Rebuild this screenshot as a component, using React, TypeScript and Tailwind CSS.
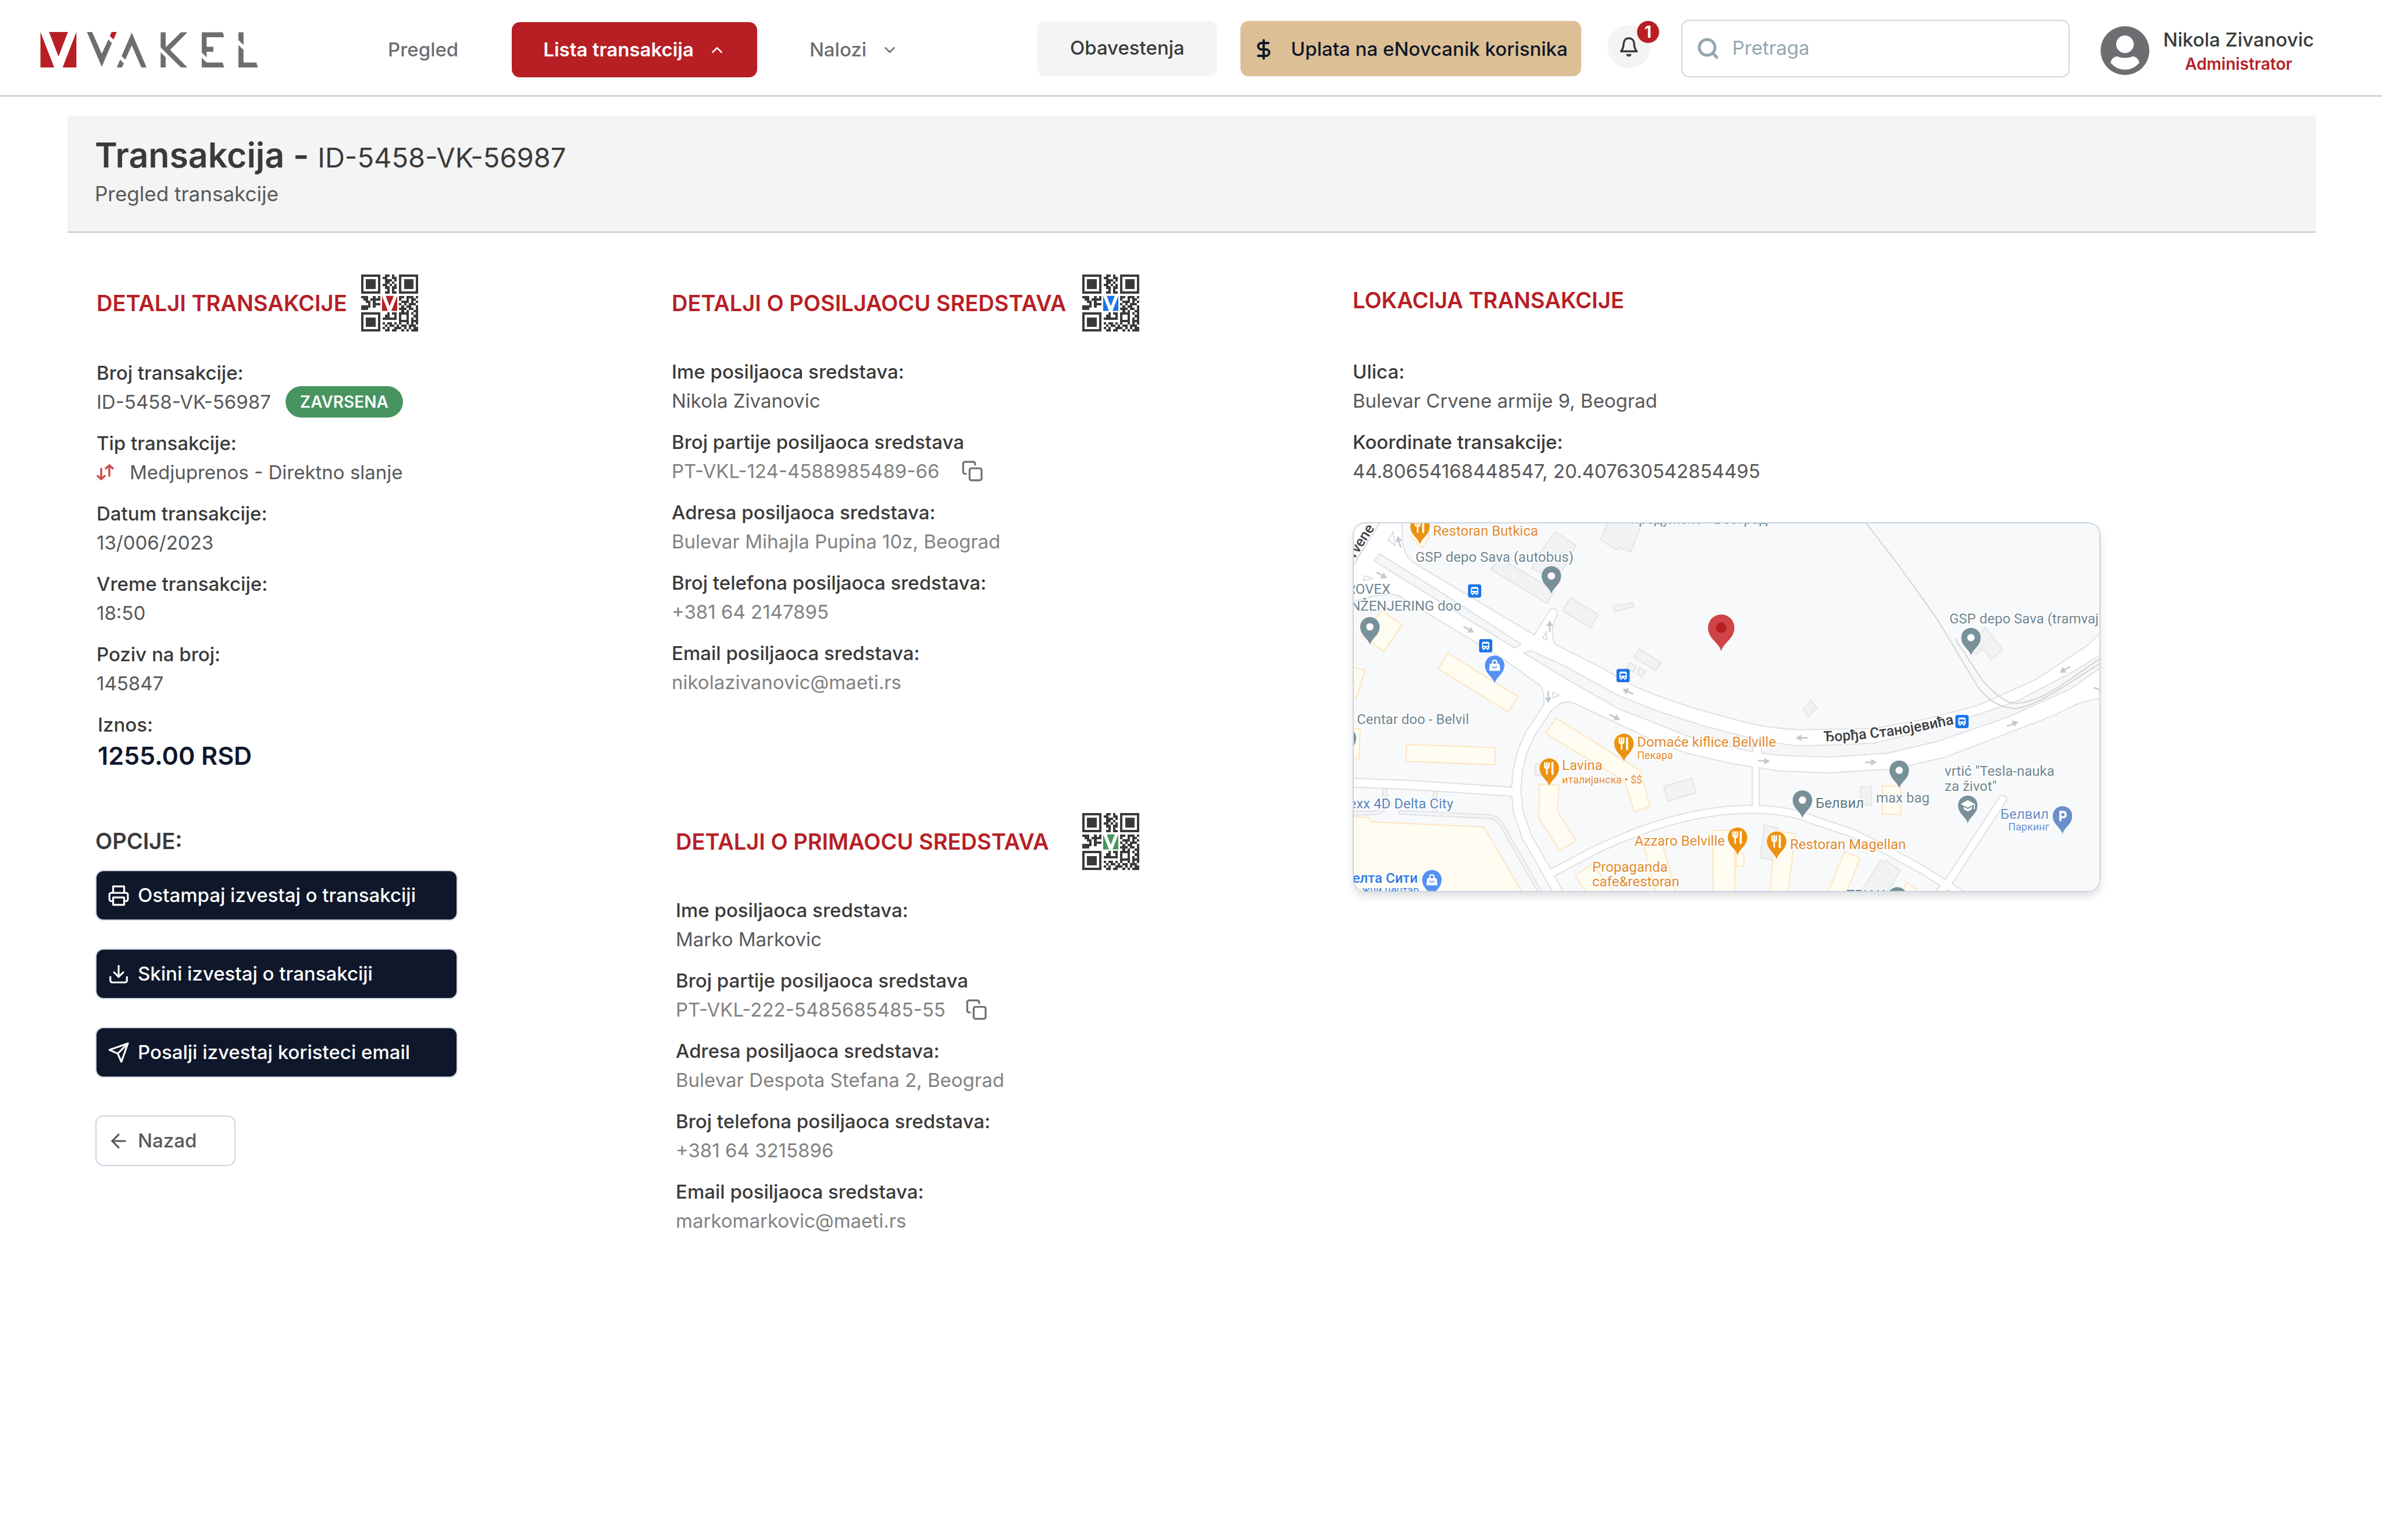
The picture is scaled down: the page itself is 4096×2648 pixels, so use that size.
import type { ReactNode } from "react";
import { ArrowLeft, ChevronDown, ChevronUp, DollarSign } from "lucide-react";
import { FiCopy, FiDownload, FiPrinter, FiSend } from "react-icons/fi";

interface Field {
  label: string;
  value: string;
  muted?: boolean;
  copy?: boolean;
}

const SENDER: Field[] = [
  { label: "Ime posiljaoca sredstava:", value: "Nikola Zivanovic" },
  { label: "Broj partije posiljaoca sredstava", value: "PT-VKL-124-4588985489-66", muted: true, copy: true },
  { label: "Adresa posiljaoca sredstava:", value: "Bulevar Mihajla Pupina 10z, Beograd", muted: true },
  { label: "Broj telefona posiljaoca sredstava:", value: "+381 64 2147895", muted: true },
  { label: "Email posiljaoca sredstava:", value: "nikolazivanovic@maeti.rs", muted: true },
];

const RECEIVER: Field[] = [
  { label: "Ime posiljaoca sredstava:", value: "Marko Markovic" },
  { label: "Broj partije posiljaoca sredstava", value: "PT-VKL-222-5485685485-55", muted: true, copy: true },
  { label: "Adresa posiljaoca sredstava:", value: "Bulevar Despota Stefana 2, Beograd", muted: true },
  { label: "Broj telefona posiljaoca sredstava:", value: "+381 64 3215896", muted: true },
  { label: "Email posiljaoca sredstava:", value: "markomarkovic@maeti.rs", muted: true },
];

const LOCATION: Field[] = [
  { label: "Ulica:", value: "Bulevar Crvene armije 9, Beograd" },
  { label: "Koordinate transakcije:", value: "44.80654168448547, 20.407630542854495" },
];

// 24x24 modules, the middle is left free for the brand mark
const QR_ROWS = [
  "########..##.#..########",
  "#......#.##..##.#......#",
  "#.####.#..###.#.#.####.#",
  "#.####.#..##.#..#.####.#",
  "#.####.#.##.#.#.#.####.#",
  "#.####.#..##.##.#.####.#",
  "#......#...#.#..#......#",
  "########..##.##.########",
  "........................",
  "###..#.#........##.###.#",
  ".##.####........#..#.##.",
  "..##.#...........###.#.#",
  "...#.###........#.#.###.",
  "####.#...........#.##..#",
  "###.............###.##.#",
  ".................#.#..##",
  "########...#.##.####.#.#",
  "#......#..##..#.#..#..##",
  "#.####.#.######.#..#.#.#",
  "#.####.#........####.###",
  "#.####.#.#.##.#.#..#.#.#",
  "#.####.#..#.##.#.##.###.",
  "#......#.#.#..###.#.#.##",
  "########..##.##..#.#.###",
];

function Logo() {
  return (
    <svg viewBox="51 60 1422 232" className="h-[61px] w-[375px]" role="img" aria-label="Vakel">
      <g fill="#b71f25">
        <path d="M51 60 141 292H51ZM107 60H231L169 221ZM286 60V292H196Z" />
        <path d="M516 60H550L529 109 505 87Z" />
      </g>
      <g fill="#6d6e71">
        <path d="M355 60H389L452 203 495 109 518 132 452 288Z" />
        <path d="M648 64 745 292H711L648 147 606 241 582 218ZM572 241 596 265 584 292H551Z" />
        <path d="M837 62H870V160L970 62H1012L899 177 1012 292H970L837 161ZM837 193 870 225V292H837Z" />
        <path d="M1106 62H1243L1253 94H1138V157H1182V189H1138V225L1106 195ZM1106 228 1138 260H1242L1253 292H1106Z" />
        <path d="M1346 62H1379V145L1346 113ZM1346 146 1379 177V260H1463L1473 292H1346Z" />
      </g>
    </svg>
  );
}

function QrCode({ color }: { color: string }) {
  return (
    <svg viewBox="0 0 24 24" className="size-[98px] shrink-0" shapeRendering="crispEdges" role="img" aria-label="QR kod">
      {QR_ROWS.map((row, y) =>
        row.split("").map((cell, x) =>
          cell === "#" ? <rect key={`${x}-${y}`} x={x} y={y} width="1" height="1" fill="#3a3a3a" /> : null
        )
      )}
      <g fill={color} shapeRendering="auto" transform="translate(8.8 9) scale(0.0272)">
        <path d="M0 0 90 232H0ZM56 0H180L118 161ZM235 0V232H145Z" />
      </g>
    </svg>
  );
}

function BellIcon() {
  return (
    <svg viewBox="130 170 128 140" className="h-[37px] w-[34px]" fill="none" stroke="#3a3a3a" strokeWidth="13" strokeLinecap="round" strokeLinejoin="round">
      <path d="M143 269H245C234 258 229 246 228 218C227 197 213 184 194 184S161 197 160 218C159 246 153 258 143 269Z" />
      <path d="M184 292Q194 302 203 292" strokeWidth="14" />
    </svg>
  );
}

function SearchIcon() {
  return (
    <svg viewBox="0 0 36 36" className="size-[36px] shrink-0" fill="none" stroke="#94a7b1" strokeLinecap="round">
      <circle cx="16.5" cy="16.5" r="13.5" strokeWidth="5" />
      <path d="m27 27 6 6.500" strokeWidth="5" />
    </svg>
  );
}

function AvatarIcon() {
  return (
    <svg viewBox="0 0 100 100" className="size-[84px] shrink-0">
      <circle cx="50" cy="50" r="50" fill="#6d6e71" />
      <circle cx="50" cy="37" r="18" fill="#fff" />
      <path d="M20.500 75C22 68 27 62 34 62Q41 65 50 65T66 62C73 62 78 68 79.500 75Q68 89 50 89T20.500 75Z" fill="#fff" />
    </svg>
  );
}

function TransferIcon() {
  return (
    <svg viewBox="0 0 30 28" className="h-[28px] w-[30px] shrink-0" fill="none" stroke="#d04a4c" strokeWidth="3.500" strokeLinecap="round" strokeLinejoin="round">
      <path d="M8 8V26M2 20.500 8 26 14 20.500" />
      <path d="M22 20V2M16 7.500 22 2 28 7.500" />
    </svg>
  );
}

function SectionTitle({ children }: { children: ReactNode }) {
  return <h2 className="text-[38px] leading-[48px] font-semibold whitespace-nowrap text-[#b71f25]">{children}</h2>;
}

function FieldRow({ label, children, muted }: { label: string; children: ReactNode; muted?: boolean }) {
  return (
    <div>
      <dt className="text-[33px] leading-[50px] font-medium text-[#3a3a3a]">{label}</dt>
      <dd className={`flex h-[50px] items-center text-[33px] leading-[50px] ${muted ? "text-[#828282]" : "text-[#58585a]"}`}>
        {children}
      </dd>
    </div>
  );
}

function FieldList({ fields }: { fields: Field[] }) {
  return (
    <dl className="mt-[44px] flex flex-col gap-[21px]">
      {fields.map((field) => (
        <FieldRow key={field.label} label={field.label} muted={field.muted}>
          {field.copy ? (
            <>
              <span className="w-[464px] whitespace-nowrap">{field.value}</span>
              <button type="button" aria-label="Kopiraj" className="ml-[34px] text-[#6d6e71]">
                <FiCopy size={38} />
              </button>
            </>
          ) : (
            field.value
          )}
        </FieldRow>
      ))}
    </dl>
  );
}

function ActionButton({ icon, children }: { icon: ReactNode; children: ReactNode }) {
  return (
    <button
      type="button"
      className="flex h-[87px] w-[623px] items-center gap-[14px] rounded-[14px] border-2 border-[#cbd5e1] px-[19px] text-[33px] font-medium text-white bg-[#0f172a]"
    >
      {icon}
      {children}
    </button>
  );
}

/* ---------- Map ---------- */

// The map geometry is kept in its own units, labels are set in pixels
const MAP_SCALE = 0.4535;
const MAP_X = 80;
const MAP_Y = 64;

const SIDE_ROADS = [
  { d: "M830 740 750 860 720 925 702 1000 695 1080 704 1160 735 1250 820 1400 870 1490", w: 32 },
  { d: "M60 1046 300 1056 695 1082", w: 30 },
  { d: "M825 1392 1000 1300Q1180 1215 1330 1180T1600 1148 1794 1178 1964 1235L2094 1300 2224 1370 2400 1480", w: 26 },
  { d: "M1604 920V1145", w: 23 },
  { d: "M2290 1480 2344 1410 2540 1110", w: 26 },
];

const LANES = [
  "M60 1162H150Q196 1162 197 1120V1070",
  "M388 1075V1160",
  "M258 1160 590 1175Q625 1178 645 1215L790 1470",
];

const SHOPS = [
  "185,395 262,447 195,549 110,493",
  "60,604 122,622 88,732 60,732",
  "437,556 702,720 666,779 400,615",
  "280,902 616,914 614,979 277,966",
  "60,842 104,842 99,956 60,955",
  "847,803 1165,1000 1204,1138 1143,1158 1108,1042 806,860",
  "784,1052 857,1056 853,1158 923,1267 860,1304 781,1180",
  "60,1174 140,1180 143,1195 573,1215 728,1480 60,1480",
  "985,1355 920,1398 970,1480 1080,1480",
  "1175,1270 1250,1280 1305,1480 1230,1480",
  "1440,1228 1525,1228 1524,1480 1443,1480",
  "1530,1317 1560,1317 1558,1364 1530,1364",
  "1680,1228 1754,1242 1724,1480 1656,1480",
  "1941,1308 2000,1333 1940,1480 1870,1480",
  "2084,1060 2154,1060 2154,1168 2084,1165",
  "2176,1425 2250,1480 2150,1480",
  "297,112 335,80 368,115 340,156",
];

const BUILDINGS = [
  "843,95 923,148 866,250 820,265 755,235 770,200",
  "632,195 842,318 812,367 600,238",
  "902,345 1008,410 978,460 870,395",
  "1065,377 1138,365 1142,380 1068,398",
  "1048,50 1178,50 1130,172 1085,155 1080,165 1050,150 1016,125",
  "1162,540 1245,592 1225,622 1142,572",
  "1122,592 1152,605 1140,628 1114,612",
  "1165,610 1188,625 1170,647 1153,632",
  "1362,1030 1378,1085 1270,1117 1255,1060",
  "1814,735 1836,762 1804,797 1784,770",
  "2474,457 2541,545 2496,580 2440,505",
  "2440,525 2460,545 2440,560 2425,545",
  "2001,1062 2044,1062 2042,1133 2001,1130",
  "1637,1208 1689,1218 1669,1340 1620,1333",
  "2079,1340 2092,1350 2098,1342 2152,1380 2095,1480 1990,1480",
  "770,972 800,975 795,1020 766,1018",
];

const ARROWS = [
  [185, 260, 30],
  [515, 466, 30],
  [1068, 798, 28],
  [1120, 702, 205],
  [823, 455, -90],
  [817, 722, 90],
  [252, 135, -105],
  [1779, 877, 180],
  [1634, 965, 5],
  [2039, 970, 0],
  [2577, 825, -22],
  [2777, 618, 150],
  [2906, 694, 20],
];

const TRIANGLES = ["228,96 210,127 237,148", "122,262 150,272 116,282", "810,475 796,498 812,506", "834,704 858,716 834,726"];

const BUS_STOPS = [
  [538, 320],
  [580, 528],
  [1101, 641],
  [2386, 815],
];

type PinKind = "dot" | "food" | "bag" | "school" | "parking";

const PINS: { x: number; y: number; kind: PinKind }[] = [
  { x: 331, y: 75, kind: "food" },
  { x: 1104, y: 898, kind: "food" },
  { x: 821, y: 992, kind: "food" },
  { x: 1535, y: 1254, kind: "food" },
  { x: 1683, y: 1269, kind: "food" },
  { x: 829, y: 263, kind: "dot" },
  { x: 141, y: 456, kind: "dot" },
  { x: 52, y: 878, kind: "dot" },
  { x: 2420, y: 497, kind: "dot" },
  { x: 2148, y: 1000, kind: "dot" },
  { x: 1781, y: 1113, kind: "dot" },
  { x: 2141, y: 1480, kind: "dot" },
  { x: 2408, y: 1133, kind: "school" },
  { x: 614, y: 602, kind: "bag" },
  { x: 376, y: 1415, kind: "bag" },
  { x: 2767, y: 1173, kind: "parking" },
];

const PIN_COLORS: Record<PinKind, string> = {
  dot: "#78909a",
  food: "#ed920e",
  bag: "#5491f5",
  school: "#78909a",
  parking: "#6b8fca",
};

interface MapText {
  x: number;
  y: number;
  text: string;
  color: string;
  small?: boolean;
  end?: boolean;
  medium?: boolean;
}

const MAP_TEXTS: MapText[] = [
  { x: 1130, y: 66, text: "продужено - Београд", color: "#6f8790" },
  { x: 380, y: 111, text: "Restoran Butkica", color: "#e28b2d" },
  { x: 314, y: 209, text: "GSP depo Sava (autobus)", color: "#6f8790" },
  { x: 219, y: 330, text: "ROVEX", color: "#6f8790", end: true },
  { x: 488, y: 394, text: "NŽENJERING doo", color: "#6f8790", end: true },
  { x: 517, y: 825, text: "Centar doo - Belvil", color: "#6f8790", end: true },
  { x: 1154, y: 911, text: "Domaće kiflice Belville", color: "#e28b2d" },
  { x: 1154, y: 956, text: "Пекара", color: "#e28b2d", small: true },
  { x: 870, y: 998, text: "Lavina", color: "#e28b2d" },
  { x: 870, y: 1050, text: "италијанска • $$", color: "#e28b2d", small: true },
  { x: 457, y: 1145, text: "exx 4D Delta City", color: "#5a84bd", end: true },
  { x: 323, y: 1426, text: "елта Сити", color: "#3478e5", end: true, medium: true },
  { x: 327, y: 1468, text: "жни центар", color: "#3478e5", end: true, small: true },
  { x: 1487, y: 1286, text: "Azzaro Belville", color: "#e28b2d", end: true },
  { x: 983, y: 1384, text: "Propaganda", color: "#e28b2d" },
  { x: 983, y: 1441, text: "cafe&restoran", color: "#e28b2d" },
  { x: 2337, y: 443, text: "GSP depo Sava (tramvaj)", color: "#6f8790" },
  { x: 2060, y: 1123, text: "max bag", color: "#6f8790" },
  { x: 1831, y: 1143, text: "Белвил", color: "#5f7680" },
  { x: 1734, y: 1299, text: "Restoran Magellan", color: "#e28b2d" },
  { x: 2321, y: 1021, text: 'vrtić "Tesla-nauka', color: "#6f8790" },
  { x: 2321, y: 1078, text: 'za život"', color: "#6f8790" },
  { x: 2716, y: 1184, text: "Белвил", color: "#6b8fca", end: true },
  { x: 2718, y: 1229, text: "Паркинг", color: "#6b8fca", end: true, small: true },
  { x: 1947, y: 1490, text: "TRIAX", color: "#6f8790" },
];

function PinGlyph({ kind }: { kind: PinKind }) {
  if (kind === "food") {
    return (
      <g fill="none" stroke="#fff" strokeWidth="6" strokeLinecap="round">
        <path d="M-17-20V-6Q-17 0-9 0T-1-6V-20M-9-20V22" />
        <path d="M12 22V-20" strokeWidth="8" />
      </g>
    );
  }
  if (kind === "bag") {
    return (
      <g>
        <path d="M-18-6H18L21 21H-21Z" fill="#fff" />
        <path d="M-8-6V-11Q-8-19 0-19T8-11V-6" fill="none" stroke="#fff" strokeWidth="5" />
        <path d="M-9 4Q0 14 9 4" fill="none" stroke="#5491f5" strokeWidth="4" />
      </g>
    );
  }
  if (kind === "school") {
    return (
      <g fill="#fff">
        <path d="M0-20 27-5 0 9-27-5Z" />
        <path d="M-16 5 0 14 16 5V14L0 23-16 14ZM23-4H27V14H23Z" />
      </g>
    );
  }
  if (kind === "parking") {
    return <path d="M-8 20V-15H3Q12-15 12-5T3 5H-8" fill="none" stroke="#fff" strokeWidth="8" />;
  }
  return <circle r="14" fill="#fff" />;
}

function LocationMap() {
  return (
    <svg viewBox="0 0 1282 632" className="block w-full font-[Roboto,sans-serif]" role="img" aria-label="Mapa lokacije transakcije">
      <rect width="1282" height="632" fill="#f8f9fb" />
      <g transform={`scale(${MAP_SCALE}) translate(${-MAP_X} ${-MAP_Y})`}>
        {BUILDINGS.map((points) => (
          <polygon key={points} points={points} fill="#f1f2f3" stroke="#e1e3e5" strokeWidth="4" />
        ))}
        {SHOPS.map((points) => (
          <polygon key={points} points={points} fill="#fffcf1" stroke="#fde7c6" strokeWidth="5" />
        ))}

        {LANES.map((d) => (
          <g key={d} fill="none" strokeLinecap="round">
            <path d={d} stroke="#dfe1e3" strokeWidth="18" />
            <path d={d} stroke="#f3f4f6" strokeWidth="10" />
          </g>
        ))}
        {SIDE_ROADS.map((road) => (
          <path key={road.d} d={road.d} fill="none" stroke="#dcdee0" strokeWidth={road.w + 8} strokeLinecap="round" strokeLinejoin="round" />
        ))}
        <path
          d="M40 40H262L263 110Q265 185 305 212L765 487 818 400Q828 382 842 388T850 415Q832 440 833 480 834 515 848 525L1030 617Q1120 675 1225 715L1370 765 1564 818Q1660 842 1774 846L2049 842 2244 807 2444 755 2664 657 2864 525 2940 450V740Q2895 705 2740 790L2324 950 2184 982 2109 996 1884 1010 1694 1003 1514 975 1340 935 1180 870 920 748Q895 735 860 748L800 800 Q805 700 790 682L650 580 265 348Q245 333 225 333 140 333 40 372Z"
          fill="#fff"
          stroke="#dcdee0"
          strokeWidth="4"
        />
        {SIDE_ROADS.map((road) => (
          <path key={road.d} d={road.d} fill="none" stroke="#fff" strokeWidth={road.w} strokeLinecap="round" strokeLinejoin="round" />
        ))}
        <g fill="#f6f7f9" stroke="#dcdee0" strokeWidth="4" strokeLinejoin="round">
          <path d="M178 180 400 318 715 522 690 537 158 207Z" />
          <path d="M725 555 750 546 870 600 1080 715 1230 775 1400 830 1592 880V930L1370 880 1190 808 1085 768 880 650Z" />
          <path d="M1626 890 1764 907 1900 904 2054 897 2244 850 2444 790 2600 735 2800 630 2940 545V590L2800 690 2564 797 2294 890 2104 935 1884 950 1704 944 1626 935Z" />
        </g>
        <path d="M40 283 185 50" fill="none" stroke="#cfd2d4" strokeWidth="4" />
        <g fill="none" stroke="#cfd0d2" strokeWidth="4">
          <path d="M2020 60 2144 220 2294 430 2444 680Q2500 760 2584 766 2640 765 2760 690L2940 575" />
          <path d="M2359 500 2464 660Q2540 745 2590 746 2660 745 2760 680L2940 555" />
        </g>
        {TRIANGLES.map((points) => (
          <polygon key={points} points={points} fill="none" stroke="#cdd1d6" strokeWidth="3" />
        ))}
        {ARROWS.map(([x, y, angle]) => (
          <path key={`${x}-${y}`} d="M-22-3H2V-13L24 0 2 13V3H-22Z" fill="#c3c9d1" transform={`translate(${x} ${y}) rotate(${angle})`} />
        ))}
        {BUS_STOPS.map(([x, y]) => (
          <g key={`${x}-${y}`} transform={`translate(${x} ${y})`}>
            <rect x="-25" y="-25" width="50" height="50" rx="8" fill="#1a73e8" />
            <path d="M-14 11V-9Q-14-15-8-15H8Q14-15 14-9V11H10V16H5V11H-5V16H-10V11Z" fill="#fff" />
            <path d="M-10-8H10V0H-10ZM-9 4H-4V8H-9ZM4 4H9V8H4Z" fill="#1a73e8" />
          </g>
        ))}
        {PINS.map((pin) => (
          <g key={`${pin.x}-${pin.y}`} transform={`translate(${pin.x} ${pin.y})`}>
            <path d="M0 72C-5 44-38 34-38 0A38 38 0 1 1 38 0C38 34 5 44 0 72Z" fill={PIN_COLORS[pin.kind]} stroke="#fff" strokeWidth="2" />
            <PinGlyph kind={pin.kind} />
          </g>
        ))}
        <g transform="translate(1473 459)">
          <path d="M0 90C-7 56-50 44-50 0A50 50 0 1 1 50 0C50 44 7 56 0 90Z" fill="#d04447" />
          <circle r="20" fill="#b71f25" />
        </g>
      </g>

      <g stroke="#fff" strokeWidth="4" strokeLinejoin="round" style={{ paintOrder: "stroke" }}>
        {MAP_TEXTS.map((item) => (
          <text
            key={`${item.text}-${item.x}`}
            x={Math.round((item.x - MAP_X) * MAP_SCALE)}
            y={Math.round((item.y - MAP_Y) * MAP_SCALE)}
            fill={item.color}
            textAnchor={item.end ? "end" : "start"}
            className={`${item.small ? "text-[18px]" : "text-[24px]"} ${item.medium ? "font-medium" : ""}`}
          >
            {item.text}
          </text>
        ))}
        <path id="street" d="M808 375Q930 372 1072 335" fill="none" stroke="none" />
        <text fill="#3c4043" className="text-[25px] font-medium">
          <textPath href="#street">Ђорђа Станојевића</textPath>
        </text>
        <text fill="#3c4043" className="text-[25px] font-medium" textAnchor="end" transform="translate(36 8) rotate(-57)">
          Crvene
        </text>
      </g>
    </svg>
  );
}

/* ---------- Page ---------- */

function Header() {
  return (
    <header className="flex h-[166px] items-center border-b-2 border-[#c4c4c4] pt-[2px] pr-[117px] pl-[69px]">
      <nav className="flex items-center pt-[5px] text-[33px] font-medium">
        <a href="#" className="mr-[223px]">
          <Logo />
        </a>
        <a href="#" className="mr-[92px] text-[#6d6e71]">
          Pregled
        </a>
        <button type="button" className="mr-[90px] flex h-[95px] items-center gap-[25px] rounded-[14px] bg-[#b71f25] px-[54px] font-semibold text-white">
          Lista transakcija
          <ChevronUp size={30} />
        </button>
        <button type="button" className="flex items-center gap-[25px] text-[#6d6e71]">
          Nalozi
          <ChevronDown size={30} />
        </button>
      </nav>

      <div className="ml-auto flex items-center text-[33px]">
        <button type="button" className="mr-[40px] h-[95px] rounded-[14px] bg-[#f4f4f4] px-[56px] font-medium text-[#3a3a3a]">
          Obavestenja
        </button>
        <button type="button" className="mr-[45px] flex h-[95px] items-center gap-[28px] rounded-[14px] bg-[#dcbf94] pt-[4px] pr-[23px] pl-[21px] font-medium text-[#0f172a]">
          <DollarSign size={38} strokeWidth={2.5} />
          Uplata na eNovcanik korisnika
        </button>
        <button type="button" aria-label="Notifikacije" className="relative mr-[53px] mb-[6px] flex size-[74px] items-center justify-center rounded-full bg-[#f4f4f4]">
          <BellIcon />
          <span className="absolute -top-[7px] -right-[15px] flex size-[38px] items-center justify-center rounded-full bg-[#b71f25] text-[28px] leading-[38px] font-bold text-white">
            1
          </span>
        </button>
        <label className="mr-[53px] flex h-[99px] w-[668px] items-center gap-[24px] rounded-[14px] border-2 border-[#cbd5e1] px-[26px]">
          <SearchIcon />
          <input
            type="search"
            placeholder="Pretraga"
            aria-label="Pretraga"
            className="w-full min-w-0 bg-transparent text-[33px] outline-none placeholder:text-[#94a7b1]"
          />
        </label>
        <div className="flex items-center gap-[24px] pt-[8px]">
          <AvatarIcon />
          <div className="flex flex-col items-center pt-[2px]">
            <span className="leading-[44px] font-medium text-[#3a3a3a]">Nikola Zivanovic</span>
            <span className="text-[28px] leading-[40px] font-semibold text-[#b71f25]">Administrator</span>
          </div>
        </div>
      </div>
    </header>
  );
}

export default function App() {
  return (
    <div className="min-h-screen bg-white font-[Inter,sans-serif]">
      <Header />

      <div className="mt-[33px] mr-[114px] ml-[116px] h-[201px] border-b-2 border-[#c4c4c4] bg-[#f4f4f4] pt-[32px] pl-[47px]">
        <h1 className="text-[59px] leading-[72px] font-semibold text-[#3a3a3a]">
          Transakcija - <span className="text-[47px] font-normal">ID-5458-VK-56987</span>
        </h1>
        <p className="mt-[2px] text-[35px] leading-[48px] text-[#58585a]">Pregled transakcije</p>
      </div>

      <main className="grid grid-cols-[991fr_1171fr_1656fr] pt-[72px] pr-[114px] pl-[164px]">
        <section>
          <div className="flex items-center gap-[24px] pl-[2px]">
            <SectionTitle>DETALJI TRANSAKCIJE</SectionTitle>
            <QrCode color="#b71f25" />
          </div>
          <dl className="mt-[46px] flex flex-col gap-[21px] pl-[2px]">
            <FieldRow label="Broj transakcije:">
              ID-5458-VK-56987
              <span className="ml-[25px] flex h-[54px] shrink-0 items-center rounded-full bg-[#479460] px-[25px] text-[28px] font-semibold text-white">
                ZAVRSENA
              </span>
            </FieldRow>
            <FieldRow label="Tip transakcije:">
              <TransferIcon />
              <span className="ml-[27px]">Medjuprenos - Direktno slanje</span>
            </FieldRow>
            <FieldRow label="Datum transakcije:">13/006/2023</FieldRow>
            <FieldRow label="Vreme transakcije:">18:50</FieldRow>
            <FieldRow label="Poziv na broj:">145847</FieldRow>
            <div className="pl-[2px]">
              <dt className="text-[33px] leading-[50px] font-medium text-[#3a3a3a]">Iznos:</dt>
              <dd className="text-[43px] leading-[56px] font-semibold text-[#0f172a]">1255.00 RSD</dd>
            </div>
          </dl>

          <h2 className="mt-[95px] text-[38px] leading-[48px] font-semibold text-[#3a3a3a]">OPCIJE:</h2>
          <div className="mt-[26px] flex flex-col gap-[48px]">
            <ActionButton icon={<FiPrinter size={38} />}>Ostampaj izvestaj o transakciji</ActionButton>
            <ActionButton icon={<FiDownload size={38} />}>Skini izvestaj o transakciji</ActionButton>
            <ActionButton icon={<FiSend size={38} />}>Posalji izvestaj koristeci email</ActionButton>
          </div>
          <button
            type="button"
            className="mt-[65px] flex h-[87px] w-[241px] items-center gap-[14px] rounded-[14px] border-2 border-[#cbd5e1] px-[19px] text-[33px] font-medium text-[#58585a]"
          >
            <ArrowLeft size={38} />
            Nazad
          </button>
        </section>

        <div>
          <section>
            <div className="flex w-[804px] items-center justify-between">
              <SectionTitle>DETALJI O POSILJAOCU SREDSTAVA</SectionTitle>
              <QrCode color="#1a73e8" />
            </div>
            <FieldList fields={SENDER} />
          </section>
          <section className="mt-[200px] pl-[7px]">
            <div className="flex w-[797px] items-center justify-between">
              <SectionTitle>DETALJI O PRIMAOCU SREDSTAVA</SectionTitle>
              <QrCode color="#479460" />
            </div>
            <FieldList fields={RECEIVER} />
          </section>
        </div>

        <section>
          <div className="flex h-[98px] items-center pb-[10px]">
            <SectionTitle>LOKACIJA TRANSAKCIJE</SectionTitle>
          </div>
          <FieldList fields={LOCATION} />
          <div className="mt-[63px] w-[1286px] max-w-full overflow-hidden rounded-[22px] border-2 border-[#cbd5e1] shadow-[0_8px_14px_rgba(0,0,0,0.12)]">
            <LocationMap />
          </div>
        </section>
      </main>
    </div>
  );
}
